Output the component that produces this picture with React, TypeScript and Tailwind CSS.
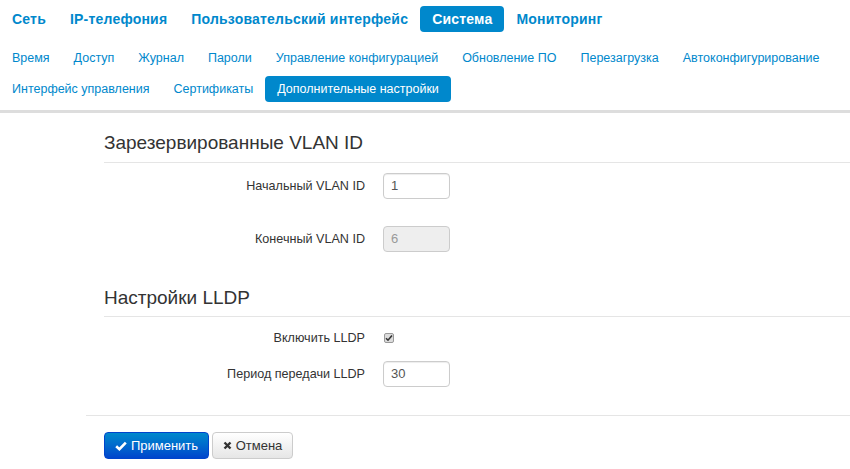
import React from "react";

const top = ["Сеть", "IP-телефония", "Пользовательский интерфейс", "Система", "Мониторинг"];
const sub1 = ["Время", "Доступ", "Журнал", "Пароли", "Управление конфигурацией", "Обновление ПО", "Перезагрузка", "Автоконфигурирование"];
const sub2 = ["Интерфейс управления", "Сертификаты", "Дополнительные настройки"];

function Row({ label, children }: { label: string; children: React.ReactNode }) {
  return (
    <div className="flex items-center h-[26px] ml-[104px]">
      <div className="w-[261px] text-right text-[12.6px] text-[#333] whitespace-nowrap">{label}</div>
      <div className="ml-[18px]">{children}</div>
    </div>
  );
}

function Input({ value, disabled }: { value: string; disabled?: boolean }) {
  return (
    <div
      className={
        "w-[67px] h-[26px] rounded-[4px] border border-[#ccc] px-[7px] flex items-center text-[13px] " +
        (disabled ? "bg-[#eeeeee] text-[#999]" : "bg-white text-[#555] shadow-[inset_0_1px_1px_rgba(0,0,0,0.075)]")
      }
    >
      {value}
    </div>
  );
}

export default function App() {
  return (
    <div className="w-[850px] h-[469px] bg-white overflow-hidden" style={{ fontFamily: '"Liberation Sans", Arial, sans-serif' }}>
      <div className="flex pt-[6px]">
        {top.map((t) => (
          <div
            key={t}
            className={
              "h-[26px] px-3 flex items-center text-[14px] font-bold rounded-[4px] whitespace-nowrap shrink-0 tracking-[0.2px] " +
              (t === "Система" ? "bg-[#0088cc] text-white" : "text-[#0088cc]")
            }
          >
            {t}
          </div>
        ))}
      </div>
      <div className="flex mt-[13px]">
        {sub1.map((t) => (
          <div key={t} className="h-[26px] px-3 flex items-center text-[12.5px] text-[#0088cc] whitespace-nowrap shrink-0">
            {t}
          </div>
        ))}
      </div>
      <div className="flex mt-[5px]">
        {sub2.map((t) => (
          <div
            key={t}
            className={
              "h-[26px] px-3 flex items-center text-[12.5px] rounded-[4px] whitespace-nowrap shrink-0 " +
              (t === "Дополнительные настройки" ? "bg-[#0088cc] text-white" : "text-[#0088cc]")
            }
          >
            {t}
          </div>
        ))}
      </div>
      <div className="mt-[8px] h-[3px] bg-[#dddddd]" />

      <div className="ml-[104px] mt-[19px] pb-[8px] border-b border-[#e5e5e5] text-[19px] leading-[22px] text-[#333]">
        Зарезервированные VLAN ID
      </div>
      <div className="mt-[10px]">
        <Row label="Начальный VLAN ID">
          <Input value="1" />
        </Row>
      </div>
      <div className="mt-[27px]">
        <Row label="Конечный VLAN ID">
          <Input value="6" disabled />
        </Row>
      </div>

      <div className="ml-[104px] mt-[35px] pb-[7px] border-b border-[#e5e5e5] text-[19px] leading-[22px] text-[#333]">
        Настройки LLDP
      </div>
      <div className="mt-[8px]">
        <Row label="Включить LLDP">
          <div className="ml-[1px] w-[10px] h-[10px] rounded-[2px] border border-[#999] bg-[#dcdcdc] flex items-center justify-center">
            <svg width="8" height="8" viewBox="0 0 8 8">
              <path d="M1 4.2 L3 6.2 L7 1.6" stroke="#333" strokeWidth="1.6" fill="none" />
            </svg>
          </div>
        </Row>
      </div>
      <div className="mt-[10px]">
        <Row label="Период передачи LLDP">
          <Input value="30" />
        </Row>
      </div>

      <div className="ml-[86px] mt-[28px] border-t border-[#e5e5e5] pt-[16px] pl-[18px] flex gap-[3px]">
        <div className="h-[27px] w-[105px] rounded-[4px] border border-[#0044cc] bg-gradient-to-b from-[#0088cc] to-[#0044cc] text-white text-[13px] flex items-center justify-center gap-[4px]">
          <svg width="12" height="10" viewBox="0 0 12 10">
            <path d="M1.2 5.2 L4.4 8.2 L10.8 1.6" stroke="white" strokeWidth="2.6" fill="none" />
          </svg>
          Применить
        </div>
        <div className="h-[27px] w-[81px] rounded-[4px] border border-[#cccccc] bg-gradient-to-b from-white to-[#e6e6e6] text-[#333] text-[13px] flex items-center justify-center gap-[4px]">
          <svg width="9" height="9" viewBox="0 0 9 9">
            <path d="M1.5 1.5 L7.5 7.5 M7.5 1.5 L1.5 7.5" stroke="#333" strokeWidth="2.4" fill="none" />
          </svg>
          Отмена
        </div>
      </div>
    </div>
  );
}
